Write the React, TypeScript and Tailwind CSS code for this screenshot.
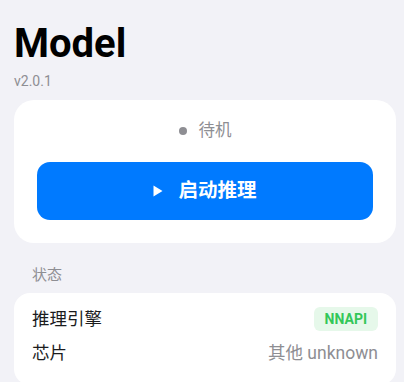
export default function App() {
  return (
    <div
      className="min-h-[382px] w-full bg-[#f2f2f7] pl-[14px] pr-[8px] pt-[20px]"
      style={{ fontFamily: 'Roboto, "Noto Sans CJK SC", sans-serif' }}
    >
      <h1 className="text-[40px] font-bold leading-[48px] text-black">Model</h1>
      <p className="mt-[4px] text-[14px] leading-[18px] text-[#8e8e93]">v2.0.1</p>

      <div className="mt-[10px] rounded-[20px] bg-white pl-[23px] pr-[23px] pb-[23px] pt-[20px]">
        <div className="flex h-[22px] items-center justify-center gap-[12px] text-[16.5px] text-[#8e8e93]">
          <span className="h-[8px] w-[8px] rounded-full bg-[#8e8e93]" />
          <span>待机</span>
        </div>
        <button className="mt-[20px] flex h-[58px] w-full items-center justify-center gap-[15px] rounded-[13px] bg-[#007aff] text-[19.5px] font-bold text-white">
          <svg width="10" height="12" viewBox="0 0 10 12">
            <path d="M0.5 0.5 L9.5 6 L0.5 11.5 Z" fill="white" />
          </svg>
          <span>启动推理</span>
        </button>
      </div>

      <p className="mt-[22px] px-[18px] text-[15px] leading-[20px] text-[#8e8e93]">状态</p>

      <div className="mt-[8px] rounded-[16px] bg-white px-[18px] pt-[14px] pb-[20px]">
        <div className="flex h-[24px] items-center justify-between">
          <span className="text-[17.5px] text-[#1c1c1e]">推理引擎</span>
          <span className="rounded-[6px] bg-[#e6f8ea] px-[11px] py-[3px] text-[14px] font-bold leading-[18px] text-[#34c759]">
            NNAPI
          </span>
        </div>
        <div className="mt-[10px] flex h-[24px] items-center justify-between">
          <span className="text-[17.5px] text-[#1c1c1e]">芯片</span>
          <span className="text-[17.5px] text-[#8e8e93]">其他 unknown</span>
        </div>
      </div>
    </div>
  );
}
